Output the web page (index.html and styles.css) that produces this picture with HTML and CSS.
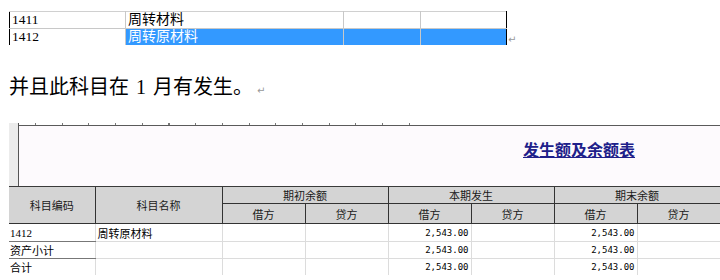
FILE: index.html
```html
<!DOCTYPE html>
<html lang="zh-CN">
<head>
  <meta charset="UTF-8">
  <title>发生额及余额表</title>
  <link rel="stylesheet" href="styles.css">
</head>
<body>
  <div class="doc-row">
    <table class="doc-table">
      <colgroup>
        <col class="c-code"><col class="c-name"><col class="c-a"><col class="c-b">
      </colgroup>
      <tr>
        <td class="code">1411</td><td>周转材料</td><td></td><td></td>
      </tr>
      <tr class="selected">
        <td class="code">1412</td><td>周转原材料</td><td></td><td></td>
      </tr>
    </table>
    <span class="ret">↵</span>
  </div>

  <p class="note">并且此科目在 1 月有发生。<span class="ret">↵</span></p>

  <div class="report">
    <div class="banner">
      <div class="gutter"></div>
      <div class="sheet-head">
        <div class="ruler"></div>
        <div class="title"><a href="#">发生额及余额表</a></div>
      </div>
    </div>

    <table class="grid">
      <colgroup>
        <col class="g-code"><col class="g-name">
        <col class="g-amt"><col class="g-amt"><col class="g-amt">
        <col class="g-amt"><col class="g-amt"><col class="g-amt">
      </colgroup>
      <thead>
        <tr class="h1">
          <th rowspan="2">科目编码</th>
          <th rowspan="2">科目名称</th>
          <th colspan="2">期初余额</th>
          <th colspan="2">本期发生</th>
          <th colspan="2">期末余额</th>
        </tr>
        <tr class="h2">
          <th>借方</th><th>贷方</th>
          <th>借方</th><th>贷方</th>
          <th>借方</th><th>贷方</th>
        </tr>
      </thead>
      <tbody>
        <tr>
          <td class="code num-l">1412</td><td class="name">周转原材料</td>
          <td></td><td></td>
          <td class="amt">2,543.00</td><td></td>
          <td class="amt">2,543.00</td><td></td>
        </tr>
        <tr>
          <td class="code">资产小计</td><td class="name"></td>
          <td></td><td></td>
          <td class="amt">2,543.00</td><td></td>
          <td class="amt">2,543.00</td><td></td>
        </tr>
        <tr class="last">
          <td class="code">合计</td><td class="name"></td>
          <td></td><td></td>
          <td class="amt">2,543.00</td><td></td>
          <td class="amt">2,543.00</td><td></td>
        </tr>
      </tbody>
    </table>
  </div>
</body>
</html>
```
FILE: styles.css
```css
/* word page with a pasted report below */
body {
  margin: 0;
  background: #fff;
  color: #000;
  font-family: "Liberation Serif", "Noto Sans CJK SC", serif;
  overflow: hidden;
}

/* small table at the top of the page */
.doc-row {
  display: flex;
  align-items: flex-end;
  padding: 11px 0 0 9px;
}

.doc-table {
  border-collapse: collapse;
  table-layout: fixed;
  width: 497px;
}

.c-code { width: 116px; }
.c-name { width: 218px; }
.c-a { width: 77px; }
.c-b { width: 86px; }

.doc-table td {
  height: 16px;
  padding: 0 2px;
  border: 1px solid #c8c8c8;
  font-size: 14px;
  line-height: 16px;
  white-space: nowrap;
  overflow: hidden;
}

.doc-table td.code {
  font-size: 13.5px;
  border-left: 1px solid #000;
}

.doc-table td:last-child {
  border-right: 1px solid #000;
}

.doc-table tr:first-child td {
  border-top-color: #d0d0d0;
}

.doc-table .selected td {
  border-bottom: none;
}

.doc-table .selected td:not(.code) {
  background: #3399ff;
  color: #fff;
}

.ret {
  color: #999;
  font-family: "DejaVu Sans", sans-serif;
  font-size: 10px;
  line-height: 10px;
}

.doc-row .ret {
  margin: 0 0 0 1px;
}

/* paragraph */
.note {
  margin: 32px 0 0 9px;
  font-size: 20px;
  line-height: 20px;
  word-spacing: 2px;
}

.note .ret {
  margin-left: 4px;
}

/* pasted report */
.report {
  margin: 26px 0 0 9px;
  width: 711px;
}

.banner {
  display: flex;
  height: 63px;
  border-bottom: 1px solid #3a3a3a;
}

.gutter {
  width: 9px;
  background: #ececec;
  border-right: 1px solid #555;
}

.sheet-head {
  flex: 1;
  display: flex;
  flex-direction: column;
}

.ruler {
  height: 2px;
  margin-left: 16px;
  width: 382px;
  background: repeating-linear-gradient(to right, #777 0 1px, transparent 1px 26.7px);
}

.title {
  flex: 1;
  background: #fdfafd;
  border-top: 1px solid #5a5a5a;
  padding: 14px 0 0 504px;
}

.title a {
  color: #20208a;
  font-family: "Noto Sans CJK SC", sans-serif;
  font-size: 16px;
  font-weight: 600;
  line-height: 18px;
  text-decoration: underline;
  text-underline-offset: 1px;
}

/* report grid */
.grid {
  border-collapse: collapse;
  table-layout: fixed;
  width: 711px;
  font-family: "Noto Sans CJK SC", sans-serif;
  font-size: 11px;
}

.g-code { width: 86px; }
.g-name { width: 127px; }
.g-amt { width: 83px; }

.grid th {
  background: #d4d4d4;
  color: #1a1a1a;
  font-weight: normal;
  border: 1px solid #333;
  border-top: none;
  padding: 0;
  line-height: 14px;
}

.grid th:first-child {
  border-left: none;
}

.grid .h1 th {
  height: 16px;
}

.grid .h2 th {
  height: 19px;
}

.grid td {
  height: 16px;
  padding: 0 2px;
  border: 1px solid #dcdcdc;
  border-top: none;
  line-height: 14px;
  white-space: nowrap;
}

.grid .last td {
  border-bottom: none;
}

.grid td.code {
  border-left: none;
  border-bottom-color: #777;
  padding-left: 1px;
}

.grid td.num-l {
  font-family: "Liberation Serif", serif;
}

.grid td.name {
  border-left: 1px solid #333;
  padding-left: 2px;
}

.grid td.amt {
  text-align: right;
  font-family: "DejaVu Sans Mono", monospace;
  font-size: 9px;
  padding-right: 2px;
}

.grid tbody tr:first-child td {
  height: 17px;
}
```
